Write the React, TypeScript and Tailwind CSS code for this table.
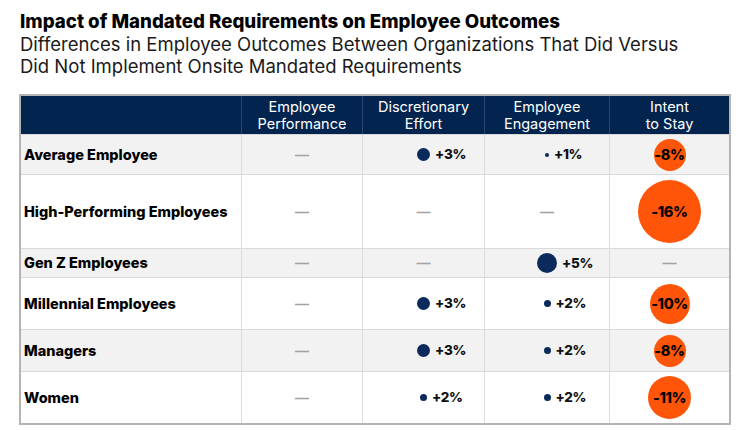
import React from 'react'

type Dot = { size: string; value: string }
type Stay = { size: string; value: string }

interface Row {
  label: string
  height: string
  bg: string
  disc: Dot | null
  eng: Dot | null
  stay: Stay | null
}

const rows: Row[] = [
  { label: 'Average Employee', height: 'h-[40px]', bg: 'bg-[#f2f2f2]', disc: { size: 'size-[13px]', value: '+3%' }, eng: { size: 'size-[4px]', value: '+1%' }, stay: { size: 'size-[32px]', value: '-8%' } },
  { label: 'High-Performing Employees', height: 'h-[74px]', bg: 'bg-white', disc: null, eng: null, stay: { size: 'size-[63px]', value: '-16%' } },
  { label: 'Gen Z Employees', height: 'h-[29px]', bg: 'bg-[#f2f2f2]', disc: null, eng: { size: 'size-[20px]', value: '+5%' }, stay: null },
  { label: 'Millennial Employees', height: 'h-[52px]', bg: 'bg-white', disc: { size: 'size-[13px]', value: '+3%' }, eng: { size: 'size-[7px]', value: '+2%' }, stay: { size: 'size-[40px]', value: '-10%' } },
  { label: 'Managers', height: 'h-[42px]', bg: 'bg-[#f2f2f2]', disc: { size: 'size-[13px]', value: '+3%' }, eng: { size: 'size-[7px]', value: '+2%' }, stay: { size: 'size-[32px]', value: '-8%' } },
  { label: 'Women', height: 'h-[52px]', bg: 'bg-white', disc: { size: 'size-[7px]', value: '+2%' }, eng: { size: 'size-[7px]', value: '+2%' }, stay: { size: 'size-[43px]', value: '-11%' } },
]

const COLS = 'grid grid-cols-[220px_121px_122px_125px_120px]'

const Dash = () => (
  <span className="text-[14px] font-bold leading-none text-[#a3a3a3] font-['Liberation_Sans',sans-serif]">—</span>
)

const DotCell = ({ dot }: { dot: Dot | null }) => {
  if (!dot) {
    return (
      <div className="flex h-full items-center justify-center border-l border-[#dcdcdc]">
        <Dash />
      </div>
    )
  }
  return (
    <div className="grid h-full grid-cols-[1fr_auto_1fr] items-center border-l border-[#dcdcdc]">
      <span />
      <span className={`${dot.size} rounded-full bg-[#0a2a5c]`} />
      <span className="pl-[5px] text-[13.5px] font-extrabold tracking-tight text-[#111]">{dot.value}</span>
    </div>
  )
}

const StayCell = ({ stay }: { stay: Stay | null }) => (
  <div className="flex h-full items-center justify-center border-l border-[#dcdcdc]">
    {stay ? (
      <div className={`${stay.size} flex items-center justify-center rounded-full bg-[#ff5508]`}>
        <span className="text-[14.5px] font-extrabold tracking-tight text-black">{stay.value}</span>
      </div>
    ) : (
      <Dash />
    )}
  </div>
)

const headers = [
  ['Employee', 'Performance'],
  ['Discretionary', 'Effort'],
  ['Employee', 'Engagement'],
  ['Intent', 'to Stay'],
]

export default function App() {
  return (
    <div className="h-[430px] w-[750px] bg-white font-['Inter',sans-serif] text-[#111]">
      <div className="pl-[20px] pt-[10px]">
        <h1 className="text-[18.7px] font-extrabold leading-[23px] text-black">
          Impact of Mandated Requirements on Employee Outcomes
        </h1>
        <p className="text-[18.5px] leading-[22px] text-[#1a1a1a]">
          Differences in Employee Outcomes Between Organizations That Did Versus
          <br />
          Did Not Implement Onsite Mandated Requirements
        </p>
      </div>

      <div className="ml-[19px] mt-[17px] w-[712px] border-2 border-[#b4b4b4]">
        {/* header */}
        <div className={`${COLS} h-[38px] bg-[#02244f] text-white`}>
          <div />
          {headers.map(([a, b]) => (
            <div key={a + b} className="flex flex-col items-center justify-center border-l border-[#2a4670] text-[14.5px] leading-[17px]">
              <span>{a}</span>
              <span>{b}</span>
            </div>
          ))}
        </div>

        {rows.map((r) => (
          <div key={r.label} className={`${COLS} ${r.height} ${r.bg} border-t border-[#d9d9d9]`}>
            <div className="flex items-center pl-[3px] text-[14.5px] font-extrabold text-black">{r.label}</div>
            <div className="flex h-full items-center justify-center border-l border-[#dcdcdc]">
              <Dash />
            </div>
            <DotCell dot={r.disc} />
            <DotCell dot={r.eng} />
            <StayCell stay={r.stay} />
          </div>
        ))}
      </div>
    </div>
  )
}
